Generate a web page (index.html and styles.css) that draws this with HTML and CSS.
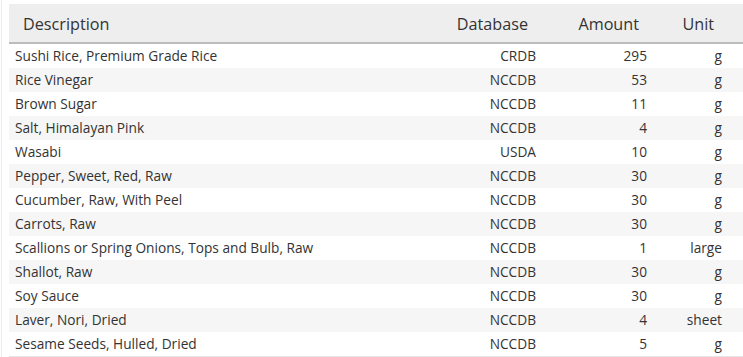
FILE: index.html
```html
<!DOCTYPE html>
<html>
<head>
<meta charset="utf-8">
<link rel="stylesheet" href="styles.css">
</head>
<body>
<div class="frame">
<table class="ingredients">
<colgroup>
<col class="c-desc"><col class="c-db"><col class="c-amt"><col class="c-unit">
</colgroup>
<thead>
<tr><th class="left">Description</th><th>Database</th><th>Amount</th><th class="last">Unit</th></tr>
</thead>
<tbody>
<tr><td class="left">Sushi Rice, Premium Grade Rice</td><td>CRDB</td><td>295</td><td class="last">g</td></tr>
<tr><td class="left">Rice Vinegar</td><td>NCCDB</td><td>53</td><td class="last">g</td></tr>
<tr><td class="left">Brown Sugar</td><td>NCCDB</td><td>11</td><td class="last">g</td></tr>
<tr><td class="left">Salt, Himalayan Pink</td><td>NCCDB</td><td>4</td><td class="last">g</td></tr>
<tr><td class="left">Wasabi</td><td>USDA</td><td>10</td><td class="last">g</td></tr>
<tr><td class="left">Pepper, Sweet, Red, Raw</td><td>NCCDB</td><td>30</td><td class="last">g</td></tr>
<tr><td class="left">Cucumber, Raw, With Peel</td><td>NCCDB</td><td>30</td><td class="last">g</td></tr>
<tr><td class="left">Carrots, Raw</td><td>NCCDB</td><td>30</td><td class="last">g</td></tr>
<tr><td class="left">Scallions or Spring Onions, Tops and Bulb, Raw</td><td>NCCDB</td><td>1</td><td class="last">large</td></tr>
<tr><td class="left">Shallot, Raw</td><td>NCCDB</td><td>30</td><td class="last">g</td></tr>
<tr><td class="left">Soy Sauce</td><td>NCCDB</td><td>30</td><td class="last">g</td></tr>
<tr><td class="left">Laver, Nori, Dried</td><td>NCCDB</td><td>4</td><td class="last">sheet</td></tr>
<tr><td class="left">Sesame Seeds, Hulled, Dried</td><td>NCCDB</td><td>5</td><td class="last">g</td></tr>
</tbody>
</table>
</div>
</body>
</html>
```
FILE: styles.css
```css
html, body {
  margin: 0;
  padding: 0;
  background: #fff;
}
body {
  font-family: "Open Sans", "Liberation Sans", sans-serif;
  color: #333;
  overflow: hidden;
}
.frame {
  margin-left: 1px;
  border-left: 1px solid #ececec;
  padding: 4px 0 0 7px;
  height: 357px;
  box-sizing: border-box;
}
.ingredients {
  width: 734px;
  border-collapse: collapse;
  table-layout: fixed;
}
.c-desc { width: 404px; }
.c-db { width: 130px; }
.c-amt { width: 111px; }
.c-unit { width: 89px; }
.ingredients th {
  background: #eeeeee;
  font-weight: normal;
  font-size: 16.2px;
  height: 36px;
  padding: 2px 15px 0;
  text-align: right;
  border-bottom: 2px solid #bcbcbc;
  color: #333;
}
.ingredients td {
  font-size: 13.7px;
  height: 23px;
  line-height: 20px;
  padding: 0 7px 1px;
  text-align: right;
  white-space: nowrap;
}
.ingredients th.left { text-align: left; padding-left: 14px; }
.ingredients td.left { text-align: left; padding-left: 6px; }
.ingredients th.last { padding-right: 29px; }
.ingredients td.last { padding-right: 21px; }
.ingredients tbody tr:nth-child(even) td { background: #f6f6f6; }
.ingredients tbody tr:last-child td { border-bottom: 1px solid #e6e6e6; }
```
